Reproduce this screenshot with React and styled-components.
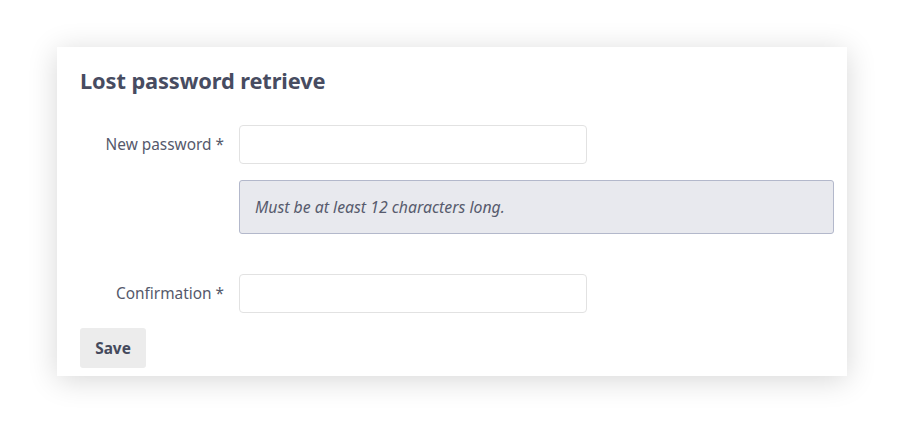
import React from "react";
import styled, { createGlobalStyle } from "styled-components";

const GlobalStyle = createGlobalStyle`
    body {
        margin: 0;
        background: #ffffff;
        font-family: "Noto Sans", "Open Sans", sans-serif;
    }
`;

const Page = styled.div`
    padding: 47px 0 0 57px;
    height: 440px;
    box-sizing: border-box;
`;

const Card = styled.div`
    width: 790px;
    height: 329px;
    box-sizing: border-box;
    background: #ffffff;
    padding: 18px 13px 0 23px;
    box-shadow: 0 4px 28px rgba(0, 0, 0, 0.16);
`;

const Title = styled.h2`
    margin: 0 0 28px;
    font-size: 21.8px;
    font-weight: 700;
    color: #474c61;
    line-height: 32px;
    letter-spacing: -0.1px;
`;

const Form = styled.div`
    display: grid;
    grid-template-columns: 144px 1fr;
    column-gap: 15px;
    align-items: center;
`;

const Label = styled.label`
    text-align: right;
    font-size: 15.4px;
    color: #55596b;
`;

const Input = styled.input`
    width: 348px;
    height: 39px;
    box-sizing: border-box;
    border: 1px solid #e2e2e2;
    border-radius: 4px;
    background: #fff;
`;

const Hint = styled.div`
    grid-column: 2;
    margin-top: 16px;
    height: 54px;
    box-sizing: border-box;
    display: flex;
    align-items: center;
    padding: 0 15px;
    background: #e8e9ee;
    border: 1px solid #b3b8cb;
    border-radius: 3px;
    font-style: italic;
    font-size: 15.8px;
    color: #575b6d;
`;

const Spacer = styled.div`
    grid-column: 1 / 3;
    height: 40px;
`;

const SaveButton = styled.button`
    margin-top: 15px;
    width: 66px;
    height: 40px;
    border: none;
    border-radius: 3px;
    background: #ececec;
    font-family: inherit;
    font-weight: 700;
    font-size: 15.4px;
    color: #454a5c;
`;

const App = () => {
    return (
        <Page>
            <GlobalStyle />
            <Card>
                <Title>Lost password retrieve</Title>
                <Form>
                    <Label>New password *</Label>
                    <Input type="password" />
                    <Hint>Must be at least 12 characters long.</Hint>
                    <Spacer />
                    <Label>Confirmation *</Label>
                    <Input type="password" />
                </Form>
                <SaveButton>Save</SaveButton>
            </Card>
        </Page>
    );
};

export default App;
